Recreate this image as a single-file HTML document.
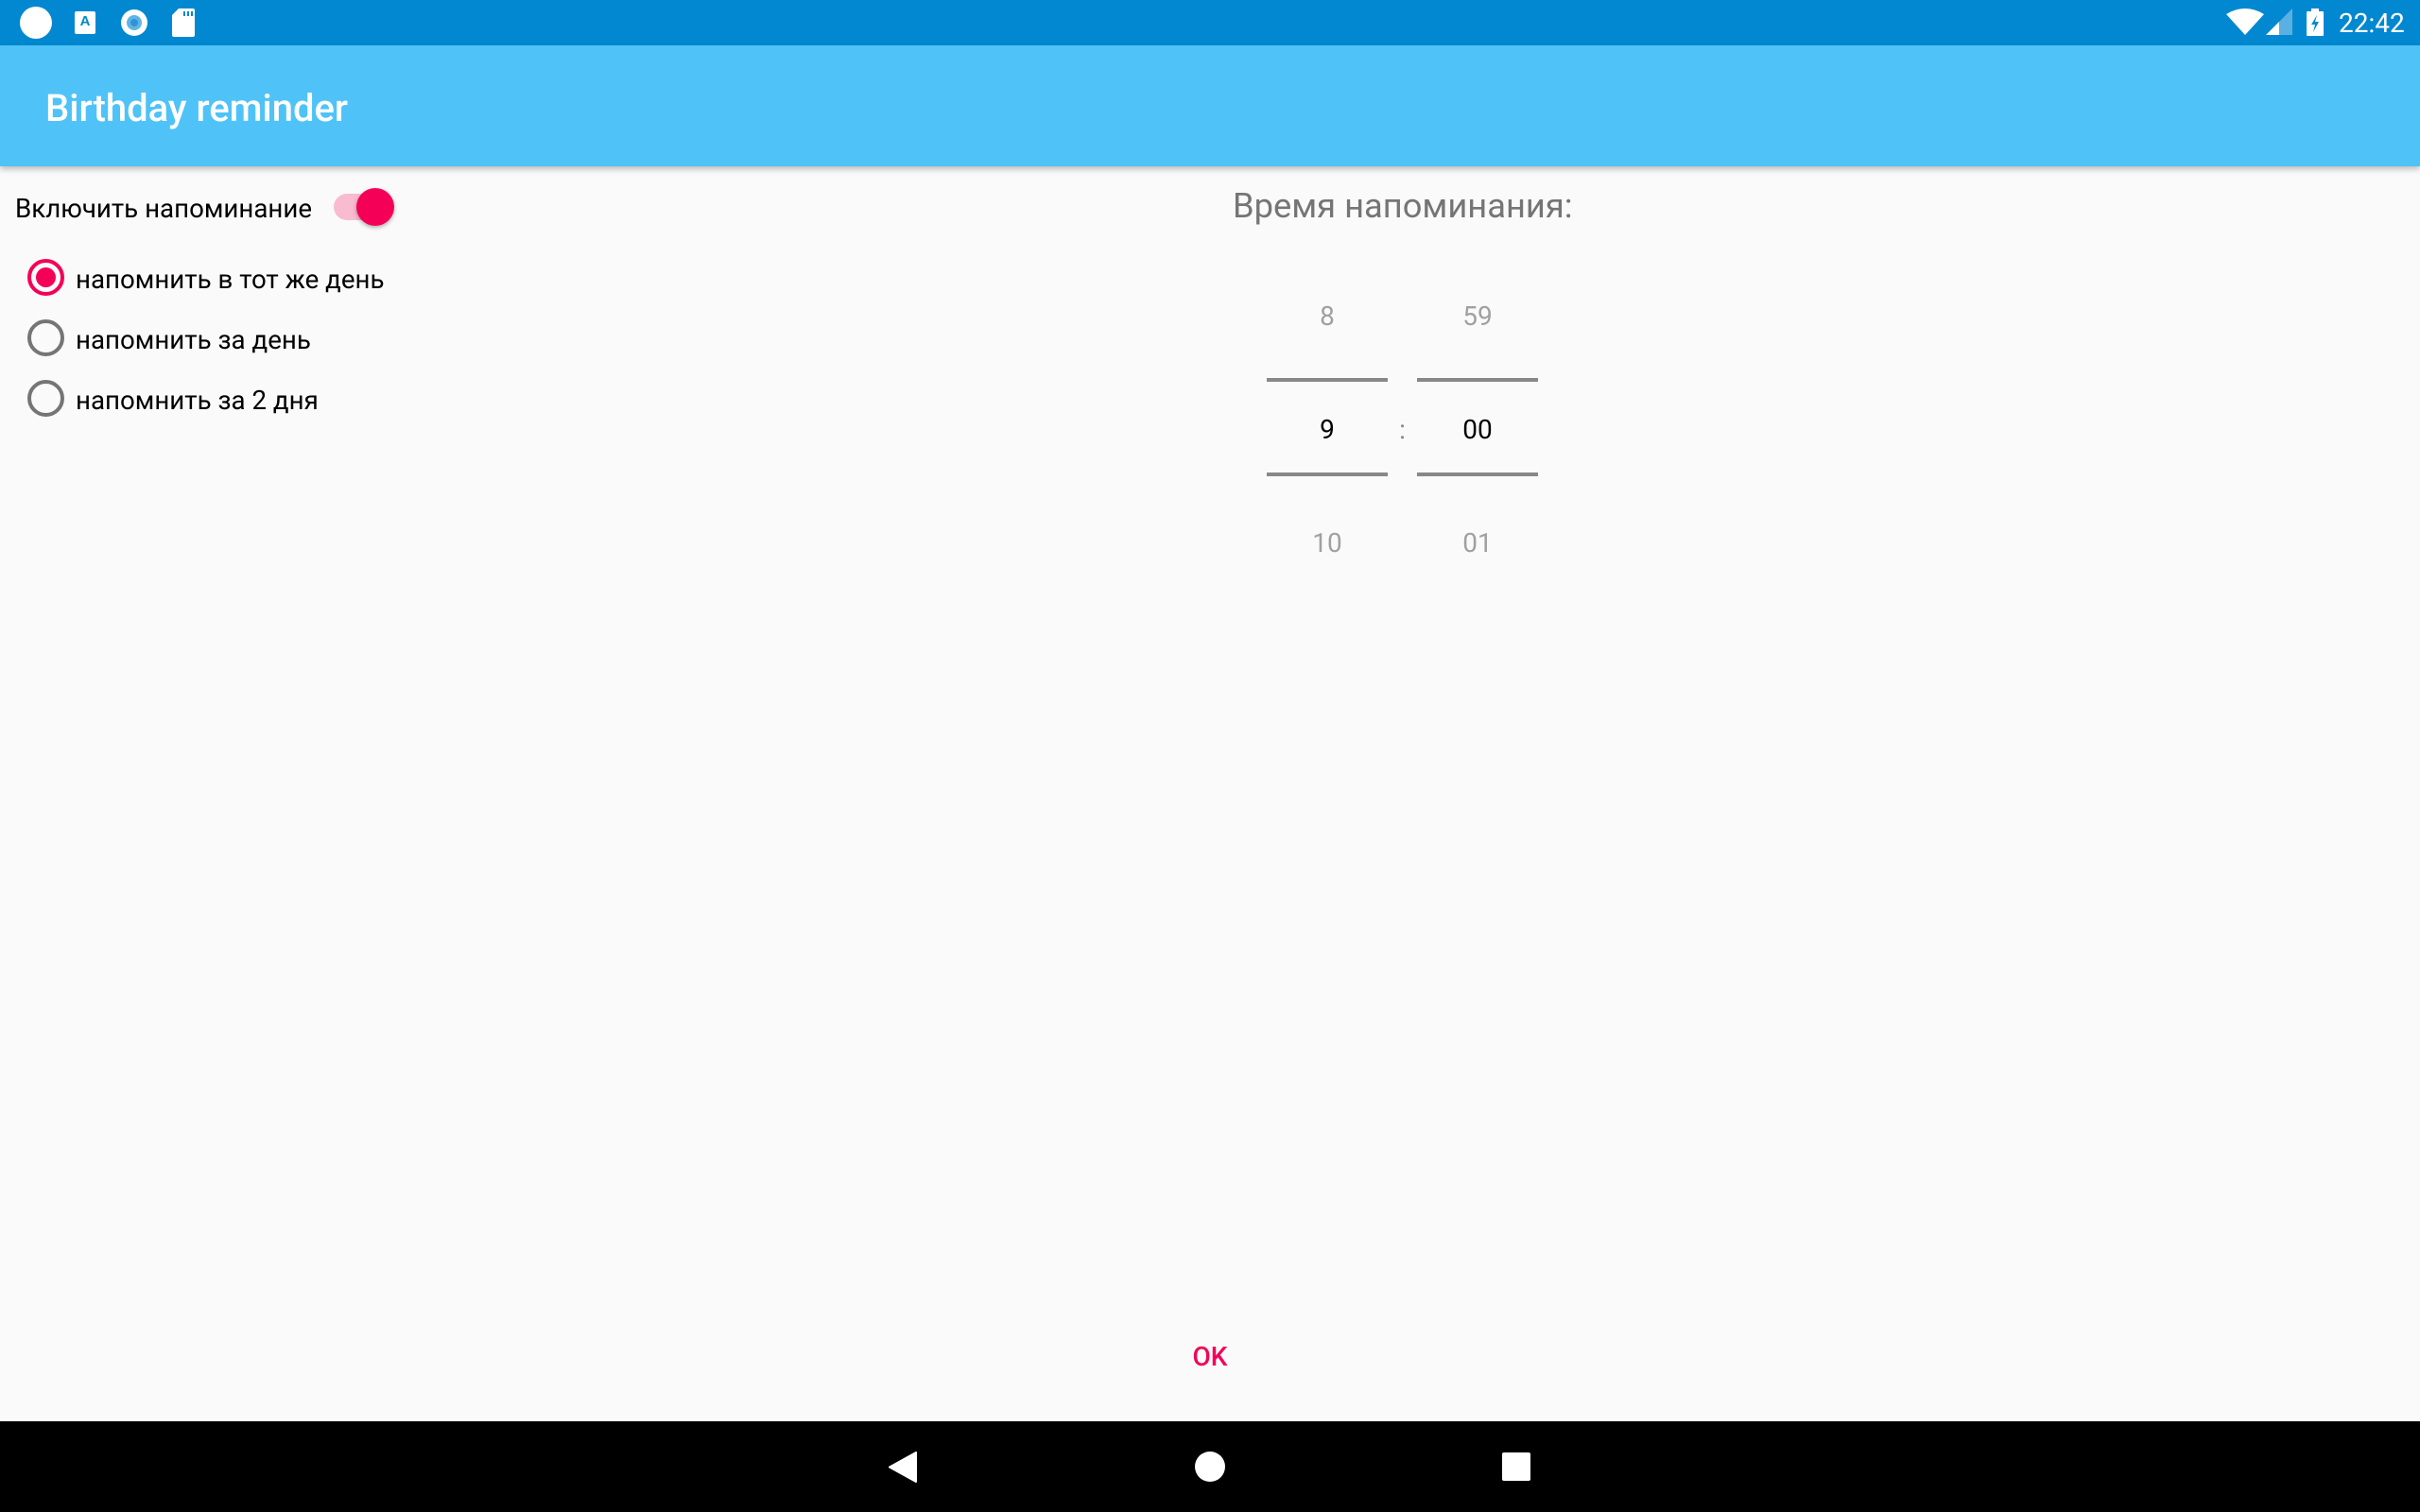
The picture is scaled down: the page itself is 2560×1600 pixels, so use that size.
<!DOCTYPE html>
<html><head><meta charset="utf-8"><style>
*{margin:0;padding:0;box-sizing:border-box}
body{width:2560px;height:1600px;background:#fafafa;font-family:"Roboto","Liberation Sans",sans-serif;position:relative;overflow:hidden}
.abs{position:absolute}
.t{position:absolute;white-space:nowrap;line-height:1}
</style></head><body>
<div class="abs" style="left:0;top:0;width:2560px;height:48px;background:#0288d1"></div>
<div class="abs" style="left:0;top:48px;width:2560px;height:128px;background:#4fc3f7;box-shadow:0 3px 6px rgba(0,0,0,0.25)"></div>
<div class="abs" style="left:21px;top:7px;width:34px;height:34px;border-radius:50%;background:#fff"></div>
<div class="abs" style="left:79px;top:12px;width:22px;height:24px;background:#fff;border-radius:2px;color:#0288d1;font:bold 15px 'Liberation Sans';text-align:center;line-height:22px">A</div>
<div class="abs" style="left:128px;top:10px;width:28px;height:28px;border-radius:50%;background:#fff"></div>
<div class="abs" style="left:134px;top:16px;width:16px;height:16px;border-radius:50%;background:#5fb4e6"></div>
<div class="abs" style="left:138px;top:20px;width:8px;height:8px;border-radius:50%;background:#2f94d6"></div>
<svg class="abs" style="left:182px;top:9px" width="24" height="30"><path d="M7 0H22a2 2 0 0 1 2 2V28a2 2 0 0 1-2 2H2a2 2 0 0 1-2-2V7z" fill="#fff"/><rect x="12" y="3" width="2" height="5" fill="#0288d1"/><rect x="16" y="3" width="2" height="5" fill="#0288d1"/><rect x="20" y="3" width="2" height="5" fill="#0288d1"/></svg>
<svg class="abs" style="left:2355px;top:9px" width="40" height="28"><path d="M0 6Q20 -6 40 6L20 28Z" fill="#fff"/></svg>
<svg class="abs" style="left:2397px;top:9px" width="28" height="28"><path d="M28 0V28H0Z" fill="#5ab0e0"/><path d="M14 14V28H0Z" fill="#fff"/></svg>
<svg class="abs" style="left:2440px;top:9px" width="18" height="29"><rect x="5" y="0" width="8" height="3" fill="#fff"/><rect x="0" y="3" width="18" height="26" rx="1" fill="#fff"/><path d="M11 7L5 17H9L7 25L13 14H9Z" fill="#0288d1"/></svg>
<div class="t" style="left:2474px;top:11px;font-size:28px;color:#fff">22:42</div>
<div class="t" style="left:48px;top:95px;font-size:40px;font-weight:500;color:#fff">Birthday reminder</div>
<div class="t" style="left:16px;top:207px;font-size:27.7px;color:#000">Включить напоминание</div>
<div class="abs" style="left:353px;top:205px;width:58px;height:28px;border-radius:14px;background:#f8bbd0"></div>
<div class="abs" style="left:377px;top:199px;width:40px;height:40px;border-radius:50%;background:#f50057;box-shadow:0 2px 4px rgba(0,0,0,0.3)"></div>
<div class="abs" style="left:29px;top:274px;width:39px;height:39px;border-radius:50%;border:4px solid #f50057"></div>
<div class="abs" style="left:38px;top:283px;width:21px;height:21px;border-radius:50%;background:#f50057"></div>
<div class="t" style="left:80px;top:282px;font-size:27.7px;color:#000">напомнить в тот же день</div>
<div class="abs" style="left:29px;top:338px;width:39px;height:39px;border-radius:50%;border:4px solid #757575"></div>
<div class="t" style="left:80px;top:346px;font-size:27.7px;color:#000">напомнить за день</div>
<div class="abs" style="left:29px;top:402px;width:39px;height:39px;border-radius:50%;border:4px solid #757575"></div>
<div class="t" style="left:80px;top:410px;font-size:27.7px;color:#000">напомнить за 2 дня</div>
<div class="t" style="left:1304px;top:200px;font-size:36.3px;color:#757575">Время напоминания:</div>
<div class="abs" style="left:1340px;top:400px;width:128px;height:4px;background:#888"></div>
<div class="abs" style="left:1340px;top:500px;width:128px;height:4px;background:#888"></div>
<div class="abs" style="left:1499px;top:400px;width:128px;height:4px;background:#888"></div>
<div class="abs" style="left:1499px;top:500px;width:128px;height:4px;background:#888"></div>
<div class="t" style="left:1340px;width:128px;text-align:center;top:321px;font-size:28px;color:#a0a0a0">8</div>
<div class="t" style="left:1340px;width:128px;text-align:center;top:441px;font-size:28px;color:#000">9</div>
<div class="t" style="left:1340px;width:128px;text-align:center;top:561px;font-size:28px;color:#a0a0a0">10</div>
<div class="t" style="left:1499px;width:128px;text-align:center;top:321px;font-size:28px;color:#a0a0a0">59</div>
<div class="t" style="left:1499px;width:128px;text-align:center;top:441px;font-size:28px;color:#000">00</div>
<div class="t" style="left:1499px;width:128px;text-align:center;top:561px;font-size:28px;color:#a0a0a0">01</div>
<div class="t" style="left:1468px;width:31px;text-align:center;top:441px;font-size:28px;color:#888">:</div>
<div class="t" style="left:1200px;width:160px;text-align:center;top:1422px;font-size:28px;font-weight:500;color:#f50057">OK</div>
<div class="abs" style="left:0;top:1504px;width:2560px;height:96px;background:#000"></div>
<svg class="abs" style="left:940px;top:1536px" width="30" height="33"><path d="M29 1V32L1 16.5Z" fill="#fff" stroke="#fff" stroke-linejoin="round" stroke-width="2"/></svg>
<div class="abs" style="left:1264px;top:1536px;width:32px;height:32px;border-radius:50%;background:#fff"></div>
<div class="abs" style="left:1589px;top:1537px;width:30px;height:30px;border-radius:2px;background:#fff"></div>
</body></html>
